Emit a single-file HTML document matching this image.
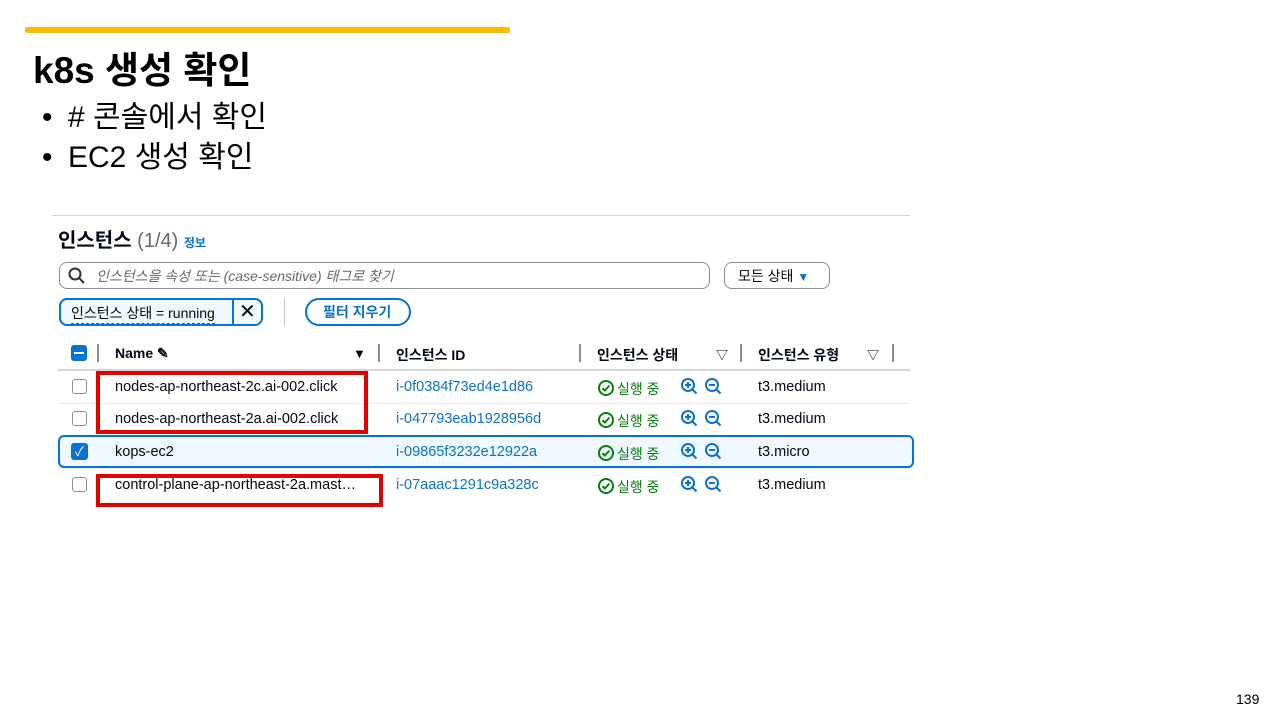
<!DOCTYPE html>
<html><head><meta charset="utf-8"><style>
*{margin:0;padding:0;box-sizing:border-box}
body{width:1280px;height:720px;background:#fff;position:relative;overflow:hidden;font-family:"Liberation Sans","Noto Sans CJK KR",sans-serif;color:#000}
.a{position:absolute;white-space:nowrap}
.s{color:#000716;font-size:14.5px}
.id{color:#0972d3;font-size:14.5px}
.ok{color:#037f0c;font-size:14px}
.hd{font-size:14px;font-weight:bold;color:#000716}
.sep{position:absolute;width:2px;height:18px;background:#8c8c94}
.cb{position:absolute;width:15px;height:15px;border:1.5px solid #8c8c94;border-radius:3px;background:#fff}
.rl{position:absolute;left:58px;width:852px;height:1px;background:#e9ebed}
.red{position:absolute;border:4px solid #e00000}
</style></head><body>
<div class="a" style="left:25px;top:27px;width:485px;height:6px;background:#f6c000;border-radius:2px"></div>
<div class="a" style="left:33px;top:40px;font-size:37px;font-weight:bold">k8s 생성 확인</div>
<div class="a" style="left:42px;top:98px;font-size:30px;line-height:40px">•</div>
<div class="a" style="left:42px;top:138px;font-size:30px;line-height:40px">•</div>
<div class="a" style="left:68px;top:98px;font-size:30px;line-height:40px">#  콘솔에서 확인</div>
<div class="a" style="left:68px;top:138px;font-size:30px;line-height:40px">EC2 생성 확인</div>

<div class="a" style="left:52px;top:215px;width:858px;height:410px;background:#fff;border-top:1px solid #d5d5d5"></div>
<div class="a" style="left:58px;top:224px;font-size:20px;font-weight:bold;color:#000716">인스턴스 <span style="font-weight:normal;color:#5f6b7a">(1/4)</span> <span style="font-size:12px;color:#0972d3">정보</span></div>
<div class="a" style="left:59px;top:262px;width:651px;height:27px;border:1.5px solid #8c8c94;border-radius:8px"></div>
<svg class="a" style="left:67px;top:266px" width="20" height="20" viewBox="0 0 20 20"><circle cx="8" cy="8" r="5.5" fill="none" stroke="#333" stroke-width="2"/><path d="M12 12l5 5" stroke="#333" stroke-width="2"/></svg>
<div class="a" style="left:96px;top:266px;font-size:14px;font-style:italic;color:#656871">인스턴스을 속성 또는 (case-sensitive) 태그로 찾기</div>
<div class="a" style="left:724px;top:262px;width:106px;height:27px;border:1.5px solid #8c8c94;border-radius:8px"></div>
<div class="a" style="left:738px;top:266px;font-size:14px;color:#000716">모든 상태 <span style="color:#0972d3;font-size:12px">▼</span></div>
<div class="a" style="left:59px;top:298px;width:204px;height:28px;border:2px solid #0972d3;border-radius:8px;background:#f0f8ff"></div>
<div class="a" style="left:232px;top:298px;width:2px;height:28px;background:#0972d3"></div>
<div class="a" style="left:71px;top:303px;font-size:14px;color:#000716;border-bottom:1px dashed #555">인스턴스 상태 = running</div>
<div class="a" style="left:239px;top:299px;font-size:20px;color:#000716">✕</div>
<div class="a" style="left:284px;top:298px;width:1px;height:28px;background:#c6c6cd"></div>
<div class="a" style="left:305px;top:298px;width:106px;height:28px;border:2px solid #0972d3;border-radius:14px"></div>
<div class="a" style="left:323px;top:302px;font-size:14px;font-weight:bold;color:#0972d3">필터 지우기</div>

<div class="a" style="left:71px;top:345px;width:16px;height:16px;background:#0972d3;border-radius:3px"><div style="position:absolute;left:3px;top:7px;width:10px;height:2px;background:#fff"></div></div>
<div class="sep" style="left:97px;top:344px"></div>
<div class="a hd" style="left:115px;top:345px">Name ✎</div>
<div class="a" style="left:353px;top:346px;font-size:13px">▼</div>
<div class="sep" style="left:378px;top:344px"></div>
<div class="a hd" style="left:396px;top:345px">인스턴스 ID</div>
<div class="sep" style="left:579px;top:344px"></div>
<div class="a hd" style="left:597px;top:345px">인스턴스 상태</div>
<div class="a" style="left:716px;top:346px;font-size:12px">▽</div>
<div class="sep" style="left:740px;top:344px"></div>
<div class="a hd" style="left:758px;top:345px">인스턴스 유형</div>
<div class="a" style="left:867px;top:346px;font-size:12px">▽</div>
<div class="sep" style="left:892px;top:344px"></div>
<div class="rl" style="top:369px;height:2px;background:#d1d5db"></div>
<div class="rl" style="top:403px"></div>
<div class="rl" style="top:468px"></div>
<div class="a" style="left:58px;top:435px;width:856px;height:33px;border:2px solid #0972d3;border-radius:6px;background:#f0f8ff"></div>

<div class="cb" style="left:72px;top:379px"></div>
<div class="cb" style="left:72px;top:411px"></div>
<div class="a" style="left:71px;top:443px;width:17px;height:17px;background:#0972d3;border-radius:3px;color:#fff;font-size:13px;text-align:center;line-height:17px">✓</div>
<div class="cb" style="left:72px;top:477px"></div>

<div class="a s" style="left:115px;top:379px">nodes-ap-northeast-2c.ai-002.click</div>
<div class="a s" style="left:115px;top:411px">nodes-ap-northeast-2a.ai-002.click</div>
<div class="a s" style="left:115px;top:444px">kops-ec2</div>
<div class="a s" style="left:115px;top:477px">control-plane-ap-northeast-2a.mast…</div>
<div class="a id" style="left:396px;top:379px">i-0f0384f73ed4e1d86</div>
<div class="a id" style="left:396px;top:411px">i-047793eab1928956d</div>
<div class="a id" style="left:396px;top:444px">i-09865f3232e12922a</div>
<div class="a id" style="left:396px;top:477px">i-07aaac1291c9a328c</div>

<!-- status rows -->
<svg class="a" style="left:597px;top:379px" width="18" height="18" viewBox="0 0 18 18"><circle cx="9" cy="9" r="7" fill="none" stroke="#037f0c" stroke-width="2"/><path d="M5.5 9.2l2.3 2.3 4.5-4.8" fill="none" stroke="#037f0c" stroke-width="2"/></svg>
<svg class="a" style="left:597px;top:411px" width="18" height="18" viewBox="0 0 18 18"><circle cx="9" cy="9" r="7" fill="none" stroke="#037f0c" stroke-width="2"/><path d="M5.5 9.2l2.3 2.3 4.5-4.8" fill="none" stroke="#037f0c" stroke-width="2"/></svg>
<svg class="a" style="left:597px;top:444px" width="18" height="18" viewBox="0 0 18 18"><circle cx="9" cy="9" r="7" fill="none" stroke="#037f0c" stroke-width="2"/><path d="M5.5 9.2l2.3 2.3 4.5-4.8" fill="none" stroke="#037f0c" stroke-width="2"/></svg>
<svg class="a" style="left:597px;top:477px" width="18" height="18" viewBox="0 0 18 18"><circle cx="9" cy="9" r="7" fill="none" stroke="#037f0c" stroke-width="2"/><path d="M5.5 9.2l2.3 2.3 4.5-4.8" fill="none" stroke="#037f0c" stroke-width="2"/></svg>
<div class="a ok" style="left:617px;top:379px">실행 중</div>
<div class="a ok" style="left:617px;top:411px">실행 중</div>
<div class="a ok" style="left:617px;top:444px">실행 중</div>
<div class="a ok" style="left:617px;top:477px">실행 중</div>

<!-- zoom icons -->
<svg class="a" style="left:680px;top:377px" width="44" height="20" viewBox="0 0 44 20"><circle cx="8" cy="8" r="6" fill="none" stroke="#0972d3" stroke-width="2"/><path d="M12.5 12.5l4 4M5 8h6M8 5v6" stroke="#0972d3" stroke-width="2"/><circle cx="32" cy="8" r="6" fill="none" stroke="#0972d3" stroke-width="2"/><path d="M36.5 12.5l4 4M29 8h6" stroke="#0972d3" stroke-width="2"/></svg>
<svg class="a" style="left:680px;top:409px" width="44" height="20" viewBox="0 0 44 20"><circle cx="8" cy="8" r="6" fill="none" stroke="#0972d3" stroke-width="2"/><path d="M12.5 12.5l4 4M5 8h6M8 5v6" stroke="#0972d3" stroke-width="2"/><circle cx="32" cy="8" r="6" fill="none" stroke="#0972d3" stroke-width="2"/><path d="M36.5 12.5l4 4M29 8h6" stroke="#0972d3" stroke-width="2"/></svg>
<svg class="a" style="left:680px;top:442px" width="44" height="20" viewBox="0 0 44 20"><circle cx="8" cy="8" r="6" fill="none" stroke="#0972d3" stroke-width="2"/><path d="M12.5 12.5l4 4M5 8h6M8 5v6" stroke="#0972d3" stroke-width="2"/><circle cx="32" cy="8" r="6" fill="none" stroke="#0972d3" stroke-width="2"/><path d="M36.5 12.5l4 4M29 8h6" stroke="#0972d3" stroke-width="2"/></svg>
<svg class="a" style="left:680px;top:475px" width="44" height="20" viewBox="0 0 44 20"><circle cx="8" cy="8" r="6" fill="none" stroke="#0972d3" stroke-width="2"/><path d="M12.5 12.5l4 4M5 8h6M8 5v6" stroke="#0972d3" stroke-width="2"/><circle cx="32" cy="8" r="6" fill="none" stroke="#0972d3" stroke-width="2"/><path d="M36.5 12.5l4 4M29 8h6" stroke="#0972d3" stroke-width="2"/></svg>

<div class="a s" style="left:758px;top:379px">t3.medium</div>
<div class="a s" style="left:758px;top:411px">t3.medium</div>
<div class="a s" style="left:758px;top:444px">t3.micro</div>
<div class="a s" style="left:758px;top:477px">t3.medium</div>

<div class="red" style="left:96px;top:371px;width:272px;height:63px"></div>
<div class="red" style="left:96px;top:474px;width:287px;height:33px"></div>

<div class="a" style="left:1236px;top:691px;font-size:14px">139</div>
</body></html>
